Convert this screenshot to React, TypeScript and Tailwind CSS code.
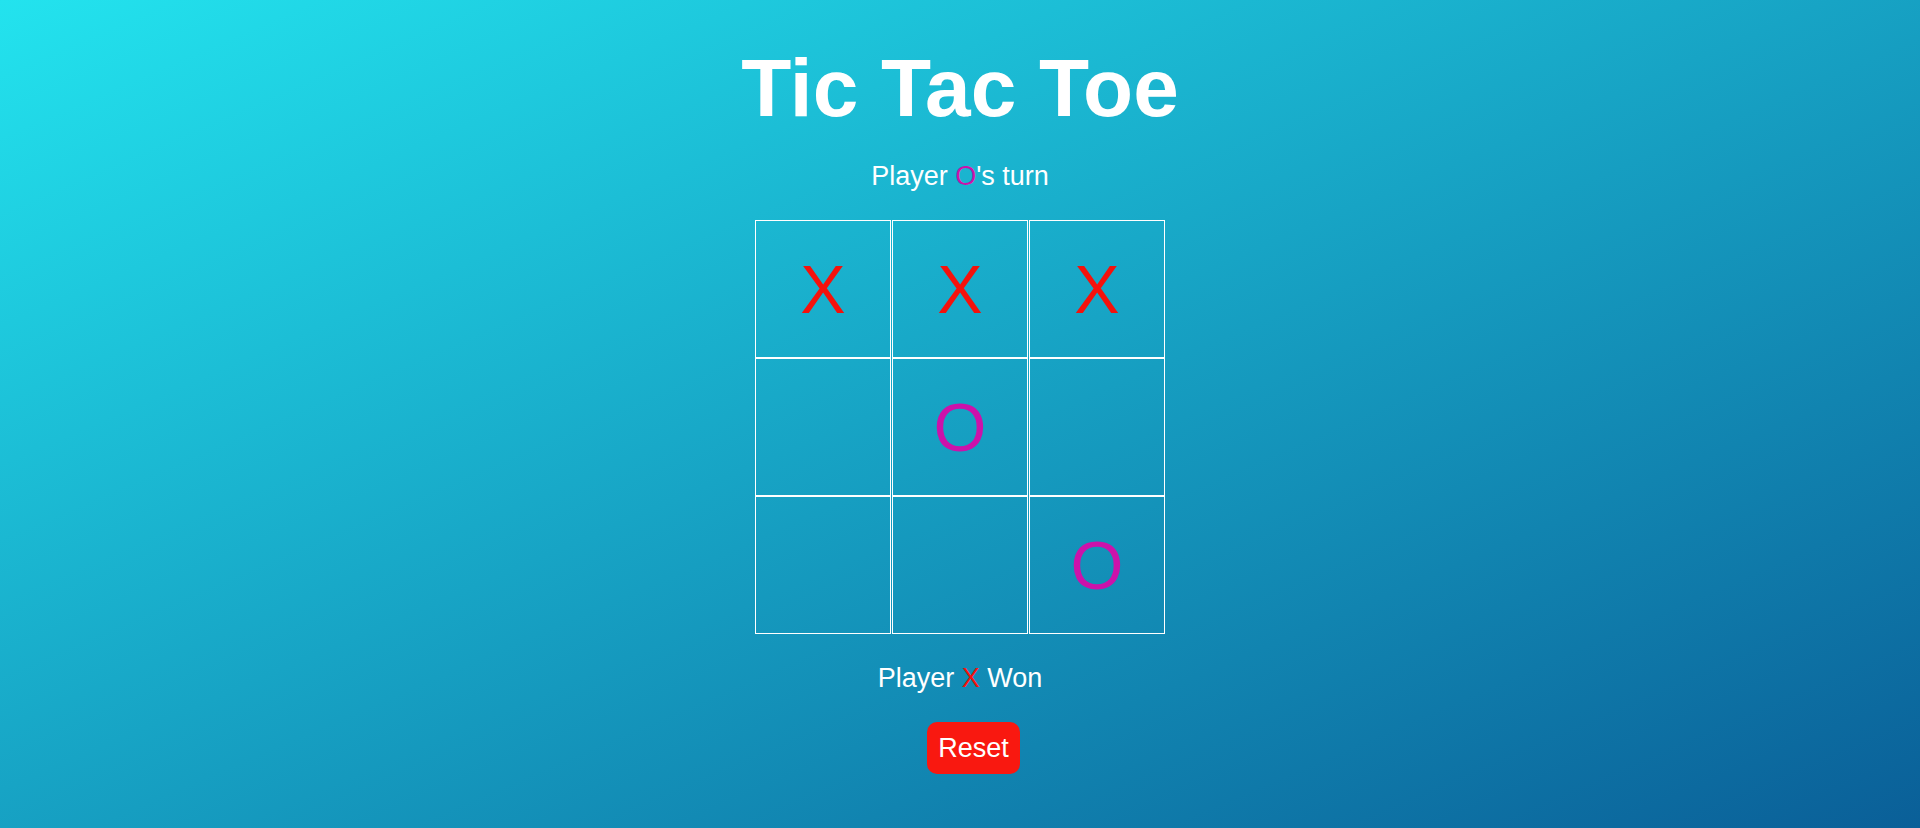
import React, { useState } from "react";

type Mark = "X" | "O" | null;

const startBoard: Mark[] = ["X", "X", "X", null, "O", null, null, null, "O"];

const lines = [
  [0, 1, 2],
  [3, 4, 5],
  [6, 7, 8],
  [0, 3, 6],
  [1, 4, 7],
  [2, 5, 8],
  [0, 4, 8],
  [2, 4, 6],
];

function getWinner(board: Mark[]): Mark {
  for (const [a, b, c] of lines) {
    if (board[a] && board[a] === board[b] && board[a] === board[c]) {
      return board[a];
    }
  }
  return null;
}

function MarkText({ mark }: { mark: Mark }) {
  if (!mark) return null;
  return (
    <span className={mark === "X" ? "text-[#f5120c]" : "text-[#cc12aa]"}>
      {mark}
    </span>
  );
}

export default function App() {
  const [board, setBoard] = useState<Mark[]>(startBoard);
  const [turn, setTurn] = useState<"X" | "O">("O");
  const winner = getWinner(board);

  const play = function (i: number) {
    if (board[i] || winner) return;
    const next = [...board];
    next[i] = turn;
    setBoard(next);
    setTurn(turn === "X" ? "O" : "X");
  };

  const reset = function () {
    setBoard(Array(9).fill(null));
    setTurn("X");
  };

  return (
    <div className="min-h-[828px] w-full bg-[linear-gradient(to_bottom_right,#23e3ee,#0a5f98)] font-['Liberation_Sans',Arial,sans-serif] text-white">
      <div className="flex flex-col items-center pt-[47px]">
        {/* Title */}
        <h1 className="text-[82px] leading-[82px] font-bold">Tic Tac Toe</h1>

        {/* Turn */}
        <p className="mt-[34px] text-[27px] leading-[27px]">
          Player <MarkText mark={turn} />'s turn
        </p>

        {/* Board */}
        <div className="mt-[30px] flex flex-col">
          {[0, 1, 2].map((row) => (
            <div key={row} className="flex gap-px">
              {[0, 1, 2].map((col) => {
                const i = row * 3 + col;
                return (
                  <div
                    key={i}
                    onClick={() => play(i)}
                    className="flex h-[138px] w-[136px] cursor-pointer items-center justify-center border border-white text-[68px] leading-[68px]"
                  >
                    <MarkText mark={board[i]} />
                  </div>
                );
              })}
            </div>
          ))}
        </div>

        {/* Result */}
        <p className="mt-[31px] h-[27px] text-[27px] leading-[27px]">
          {winner ? (
            <>
              Player <MarkText mark={winner} /> Won
            </>
          ) : null}
        </p>

        <button
          onClick={reset}
          className="mt-[30px] ml-[27px] flex h-[52px] items-center rounded-[10px] bg-[#f91810] px-[11px] text-[27px] leading-[27px] text-white"
        >
          Reset
        </button>
      </div>
    </div>
  );
}
